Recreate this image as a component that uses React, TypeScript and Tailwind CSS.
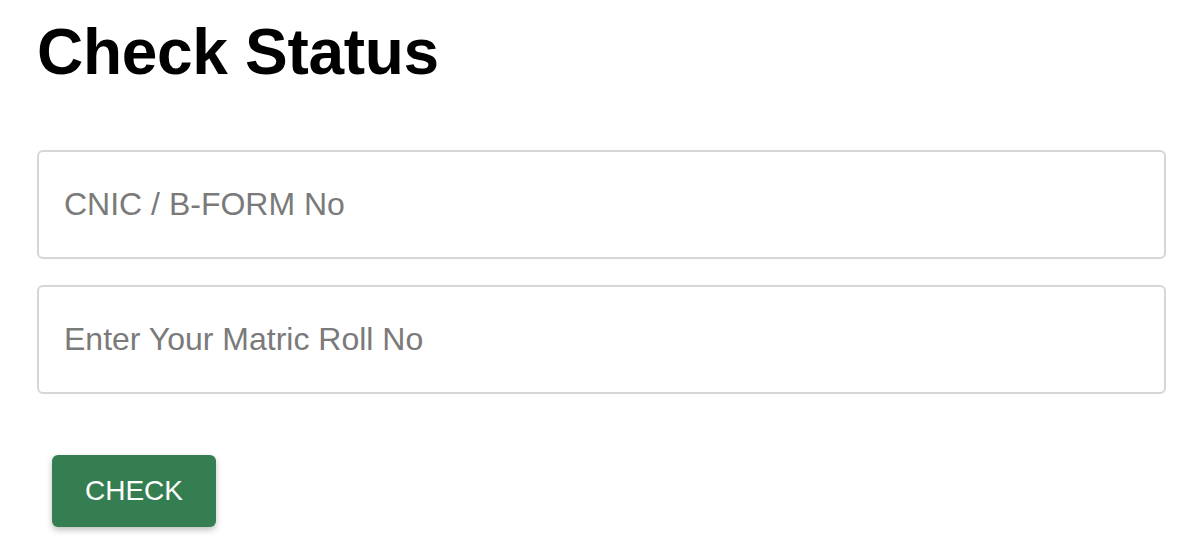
import React from "react";

export default function App() {
  return (
    <div
      className="w-[1200px] h-[555px] bg-white overflow-hidden pl-[37px] pr-[34px] pt-[20px]"
      style={{ fontFamily: '"Liberation Sans", Arial, Helvetica, sans-serif' }}
    >
      <h1 className="text-[64px] leading-[64px] font-bold text-black tracking-[-0.3px]">
        Check Status
      </h1>
      <div className="mt-[66px] flex flex-col gap-[26px]">
        <input
          type="text"
          placeholder="CNIC / B-FORM No"
          className="w-full h-[109px] border-2 border-[#d6d6d6] rounded-[6px] px-[25px] text-[32px] text-[#333] placeholder:text-[#7a7a7a] outline-none bg-white"
        />
        <input
          type="text"
          placeholder="Enter Your Matric Roll No"
          className="w-full h-[109px] border-2 border-[#d6d6d6] rounded-[6px] px-[25px] text-[32px] text-[#333] placeholder:text-[#7a7a7a] outline-none bg-white"
        />
      </div>
      <button
        type="button"
        className="mt-[61px] ml-[15px] w-[164px] h-[72px] bg-[#357e51] text-white text-[28px] rounded-[6px] shadow-[0_3px_6px_rgba(0,0,0,0.25)] flex items-center justify-center"
      >
        CHECK
      </button>
    </div>
  );
}
